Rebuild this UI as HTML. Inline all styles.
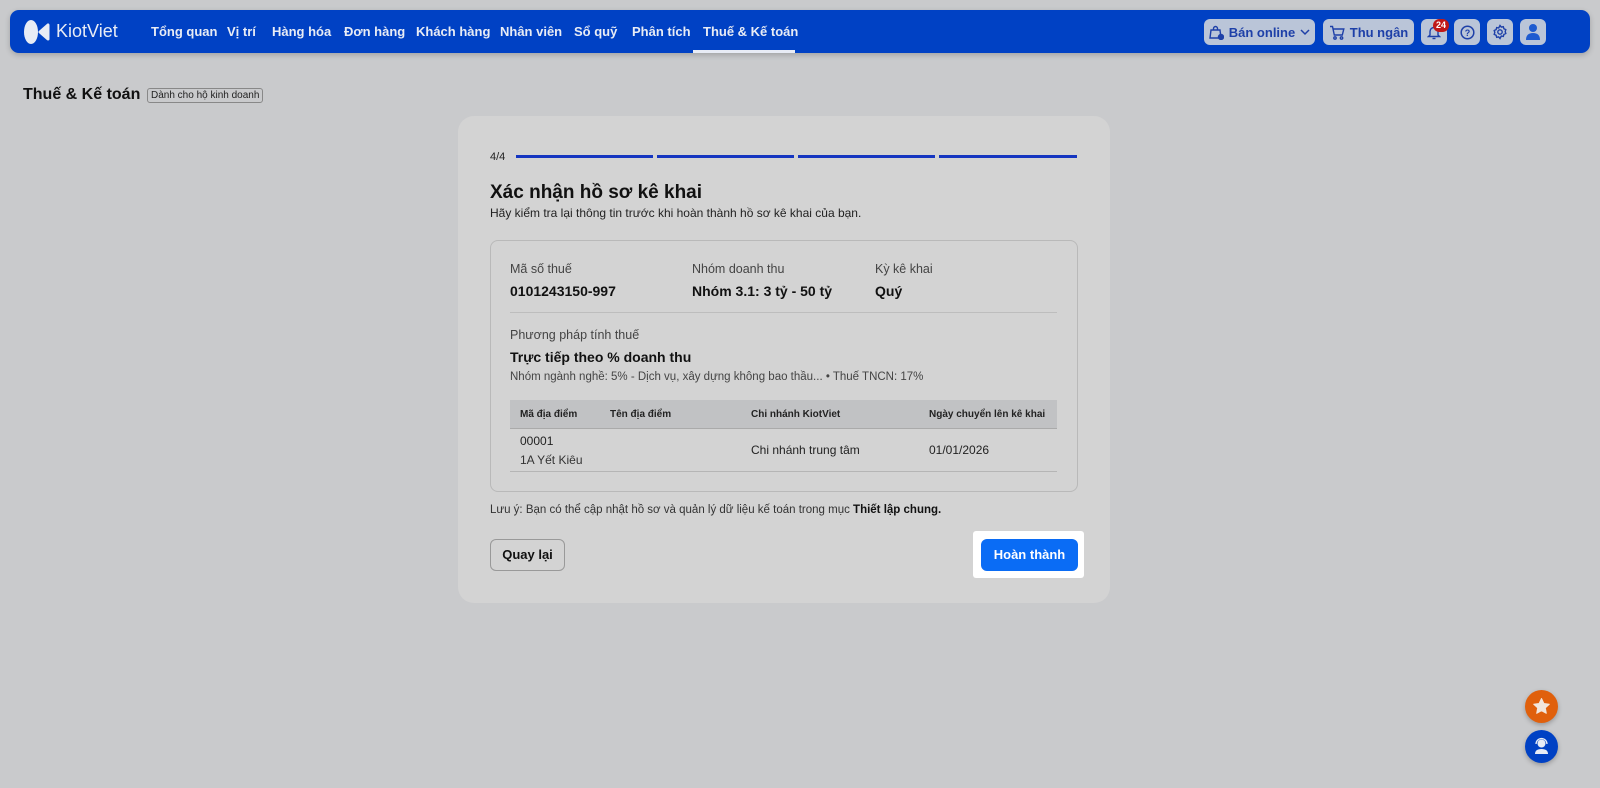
<!DOCTYPE html>
<html><head><meta charset="utf-8"><style>
*{box-sizing:border-box;margin:0;padding:0}
body{width:1600px;height:788px;background:#c9cacc;font-family:"Liberation Sans",sans-serif;color:#111;position:relative;overflow:hidden}
.nav{position:absolute;left:10px;top:10px;width:1580px;height:43px;background:#0041c4;border-radius:9px;box-shadow:0 2px 6px rgba(0,0,0,.2)}
.nav .t{position:absolute;top:14px;color:#e8ecf5;font-size:13px;font-weight:bold;white-space:nowrap}
.rb{position:absolute;top:9px;height:26px;background:#bac5d8;border-radius:6px;color:#1e40a8;font-size:13px;font-weight:bold;display:flex;align-items:center;justify-content:center;gap:5px}
.abs{position:absolute}
.card{position:absolute;left:458px;top:116px;width:652px;height:487px;background:#d3d3d3;border-radius:16px}
.seg{position:absolute;top:155px;height:3px;background:#1535c0}
.box{position:absolute;left:490px;top:240px;width:588px;height:252px;border:1px solid #b9b9b9;border-radius:8px}
.lbl{font-size:12.5px;color:#444}
.val{font-size:14px;font-weight:bold}
</style></head><body>
<div class="nav">
  <svg class="abs" style="left:13px;top:9px" width="28" height="26" viewBox="0 0 28 26"><ellipse cx="8" cy="13" rx="7" ry="12" fill="#e8ecf5"/><path d="M17 13 L25 6 L25 20 Z" fill="#e8ecf5" stroke="#e8ecf5" stroke-width="3" stroke-linejoin="round"/></svg>
  <div class="t" style="left:46px;top:11px;font-size:18px;font-weight:normal">KiotViet</div>
  <div class="t" style="left:141px">Tổng quan</div>
  <div class="t" style="left:217px">Vị trí</div>
  <div class="t" style="left:262px">Hàng hóa</div>
  <div class="t" style="left:334px">Đơn hàng</div>
  <div class="t" style="left:406px">Khách hàng</div>
  <div class="t" style="left:490px">Nhân viên</div>
  <div class="t" style="left:564px">Sổ quỹ</div>
  <div class="t" style="left:622px">Phân tích</div>
  <div class="t" style="left:693px">Thuế &amp; Kế toán</div>
  <div class="abs" style="left:683px;top:40px;width:102px;height:3px;background:#e8ecf5"></div>
  <div class="rb" style="left:1194px;width:111px"><svg width="15" height="15" viewBox="0 0 15 15" fill="none" stroke="#1e40a8" stroke-width="1.4"><path d="M2 5h9l1 8H1z"/><path d="M4.5 5V3.5a2 2 0 0 1 4 0V5"/><circle cx="12" cy="12" r="2.5" fill="#1e40a8"/></svg>Bán online <svg width="10" height="7" viewBox="0 0 10 7"><path d="M1 1l4 4 4-4" fill="none" stroke="#1e40a8" stroke-width="1.5"/></svg></div>
  <div class="rb" style="left:1313px;width:91px"><svg width="16" height="15" viewBox="0 0 16 15" fill="none" stroke="#1e40a8" stroke-width="1.4"><path d="M1 1.5h2.5l1.8 8.5h8l1.5-6H4.2"/><circle cx="6" cy="13" r="1.2"/><circle cx="12.5" cy="13" r="1.2"/></svg>Thu ngân</div>
  <div class="rb" style="left:1411px;width:26px"><svg width="14" height="15" viewBox="0 0 14 15" fill="none" stroke="#1e40a8" stroke-width="1.4"><path d="M3 10V6.5a4 4 0 0 1 8 0V10l1.5 1.5h-11z"/><path d="M5.5 13.5h3"/></svg></div>
  <div class="abs" style="left:1423px;top:9px;width:16px;height:13px;background:#c01818;border-radius:7px;color:#fff;font-size:9px;font-weight:bold;text-align:center;line-height:13px">24</div>
  <div class="rb" style="left:1444px;width:26px"><svg width="15" height="15"><circle cx="7.5" cy="7.5" r="6.3" fill="none" stroke="#1e40a8" stroke-width="1.5"/><text x="7.5" y="11" font-size="9" text-anchor="middle" fill="#1e40a8" font-weight="bold">?</text></svg></div>
  <div class="rb" style="left:1477px;width:26px"><svg width="16" height="16" viewBox="0 0 16 16" fill="none" stroke="#1e40a8" stroke-width="1.4"><path d="M8 1.5l1.3 1.6 2-.4.6 2 1.9.9-.6 2 .6 1.9-1.9.9-.6 2-2-.4L8 14.5l-1.3-1.6-2 .4-.6-2-1.9-.9.6-2-.6-1.9 1.9-.9.6-2 2 .4z"/><circle cx="8" cy="8" r="2.2"/></svg></div>
  <div class="rb" style="left:1510px;width:26px"><svg width="16" height="18"><circle cx="8" cy="5" r="4" fill="#1e5bd0"/><path d="M1 17 Q1 10 8 10 Q15 10 15 17Z" fill="#1e5bd0"/></svg></div>
</div>
<div class="abs" style="left:23px;top:86px;font-size:16px;font-weight:bold">Thuế &amp; Kế toán</div>
<div class="abs" style="left:147px;top:88px;height:15px;padding:0 3px;border:1px solid #888;border-radius:3px;font-size:10px;line-height:13px;color:#222">Dành cho hộ kinh doanh</div>
<div class="card"></div>
<div class="abs" style="left:490px;top:151px;font-size:11px;color:#222">4/4</div>
<div class="seg" style="left:516px;width:137px"></div>
<div class="seg" style="left:657px;width:137px"></div>
<div class="seg" style="left:798px;width:137px"></div>
<div class="seg" style="left:939px;width:138px"></div>
<div class="abs" style="left:490px;top:182px;font-size:19px;font-weight:bold">Xác nhận hồ sơ kê khai</div>
<div class="abs" style="left:490px;top:206px;font-size:12px;color:#222">Hãy kiểm tra lại thông tin trước khi hoàn thành hồ sơ kê khai của bạn.</div>
<div class="box"></div>
<div class="abs lbl" style="left:510px;top:262px">Mã số thuế</div>
<div class="abs val" style="left:510px;top:283px">0101243150-997</div>
<div class="abs lbl" style="left:692px;top:262px">Nhóm doanh thu</div>
<div class="abs val" style="left:692px;top:283px">Nhóm 3.1: 3 tỷ - 50 tỷ</div>
<div class="abs lbl" style="left:875px;top:262px">Kỳ kê khai</div>
<div class="abs val" style="left:875px;top:283px">Quý</div>
<div class="abs" style="left:510px;top:312px;width:547px;height:1px;background:#bdbdbd"></div>
<div class="abs lbl" style="left:510px;top:328px">Phương pháp tính thuế</div>
<div class="abs val" style="left:510px;top:349px">Trực tiếp theo % doanh thu</div>
<div class="abs" style="left:510px;top:371px;font-size:11.5px;color:#444">Nhóm ngành nghề: 5% - Dịch vụ, xây dựng không bao thầu... • Thuế TNCN: 17%</div>
<div class="abs" style="left:510px;top:400px;width:547px;height:29px;background:#c1c2c4;border-bottom:1px solid #aaa"></div>
<div class="abs" style="left:520px;top:409px;font-size:10px;font-weight:bold;color:#222">Mã địa điểm</div>
<div class="abs" style="left:610px;top:409px;font-size:10px;font-weight:bold;color:#222">Tên địa điểm</div>
<div class="abs" style="left:751px;top:409px;font-size:10px;font-weight:bold;color:#222">Chi nhánh KiotViet</div>
<div class="abs" style="left:929px;top:409px;font-size:10px;font-weight:bold;color:#222">Ngày chuyển lên kê khai</div>
<div class="abs" style="left:520px;top:434px;font-size:12px;color:#222">00001</div>
<div class="abs" style="left:520px;top:453px;font-size:12px;color:#333">1A Yết Kiêu</div>
<div class="abs" style="left:751px;top:443px;font-size:12px;color:#222">Chi nhánh trung tâm</div>
<div class="abs" style="left:929px;top:443px;font-size:12px;color:#222">01/01/2026</div>
<div class="abs" style="left:510px;top:471px;width:547px;height:1px;background:#b5b5b5"></div>
<div class="abs" style="left:490px;top:504px;font-size:11.5px;color:#333">Lưu ý: Bạn có thể cập nhật hồ sơ và quản lý dữ liệu kế toán trong mục <b style="color:#111">Thiết lập chung.</b></div>
<div class="abs" style="left:490px;top:539px;width:75px;height:32px;border:1px solid #999;border-radius:6px;font-size:13px;font-weight:bold;text-align:center;line-height:30px">Quay lại</div>
<div class="abs" style="left:973px;top:531px;width:111px;height:47px;background:#fff;border-radius:3px"></div>
<div class="abs" style="left:981px;top:539px;width:97px;height:32px;background:#0a6cf5;border-radius:6px;font-size:13px;font-weight:bold;color:#fff;text-align:center;line-height:32px">Hoàn thành</div>
<div class="abs" style="left:1525px;top:690px;width:33px;height:33px;border-radius:50%;background:#e0600c;box-shadow:0 2px 5px rgba(0,0,0,.25)"><svg width="33" height="33" viewBox="0 0 33 33"><path d="M16.5 8.5l2.4 5 5.4.7-4 3.7 1 5.4-4.8-2.6-4.8 2.6 1-5.4-4-3.7 5.4-.7z" fill="#f1e6dc" stroke="#f1e6dc" stroke-linejoin="round"/></svg></div>
<div class="abs" style="left:1525px;top:730px;width:33px;height:33px;border-radius:50%;background:#0041c4;box-shadow:0 2px 5px rgba(0,0,0,.25)"><svg width="33" height="33" viewBox="0 0 33 33"><circle cx="16.5" cy="13.5" r="4" fill="#e8ecf5"/><path d="M11 14a5.5 5.5 0 0 1 11 0" fill="none" stroke="#e8ecf5" stroke-width="1.3"/><path d="M10 24q0-5 6.5-5t6.5 5z" fill="#e8ecf5"/></svg></div>
</body></html>
